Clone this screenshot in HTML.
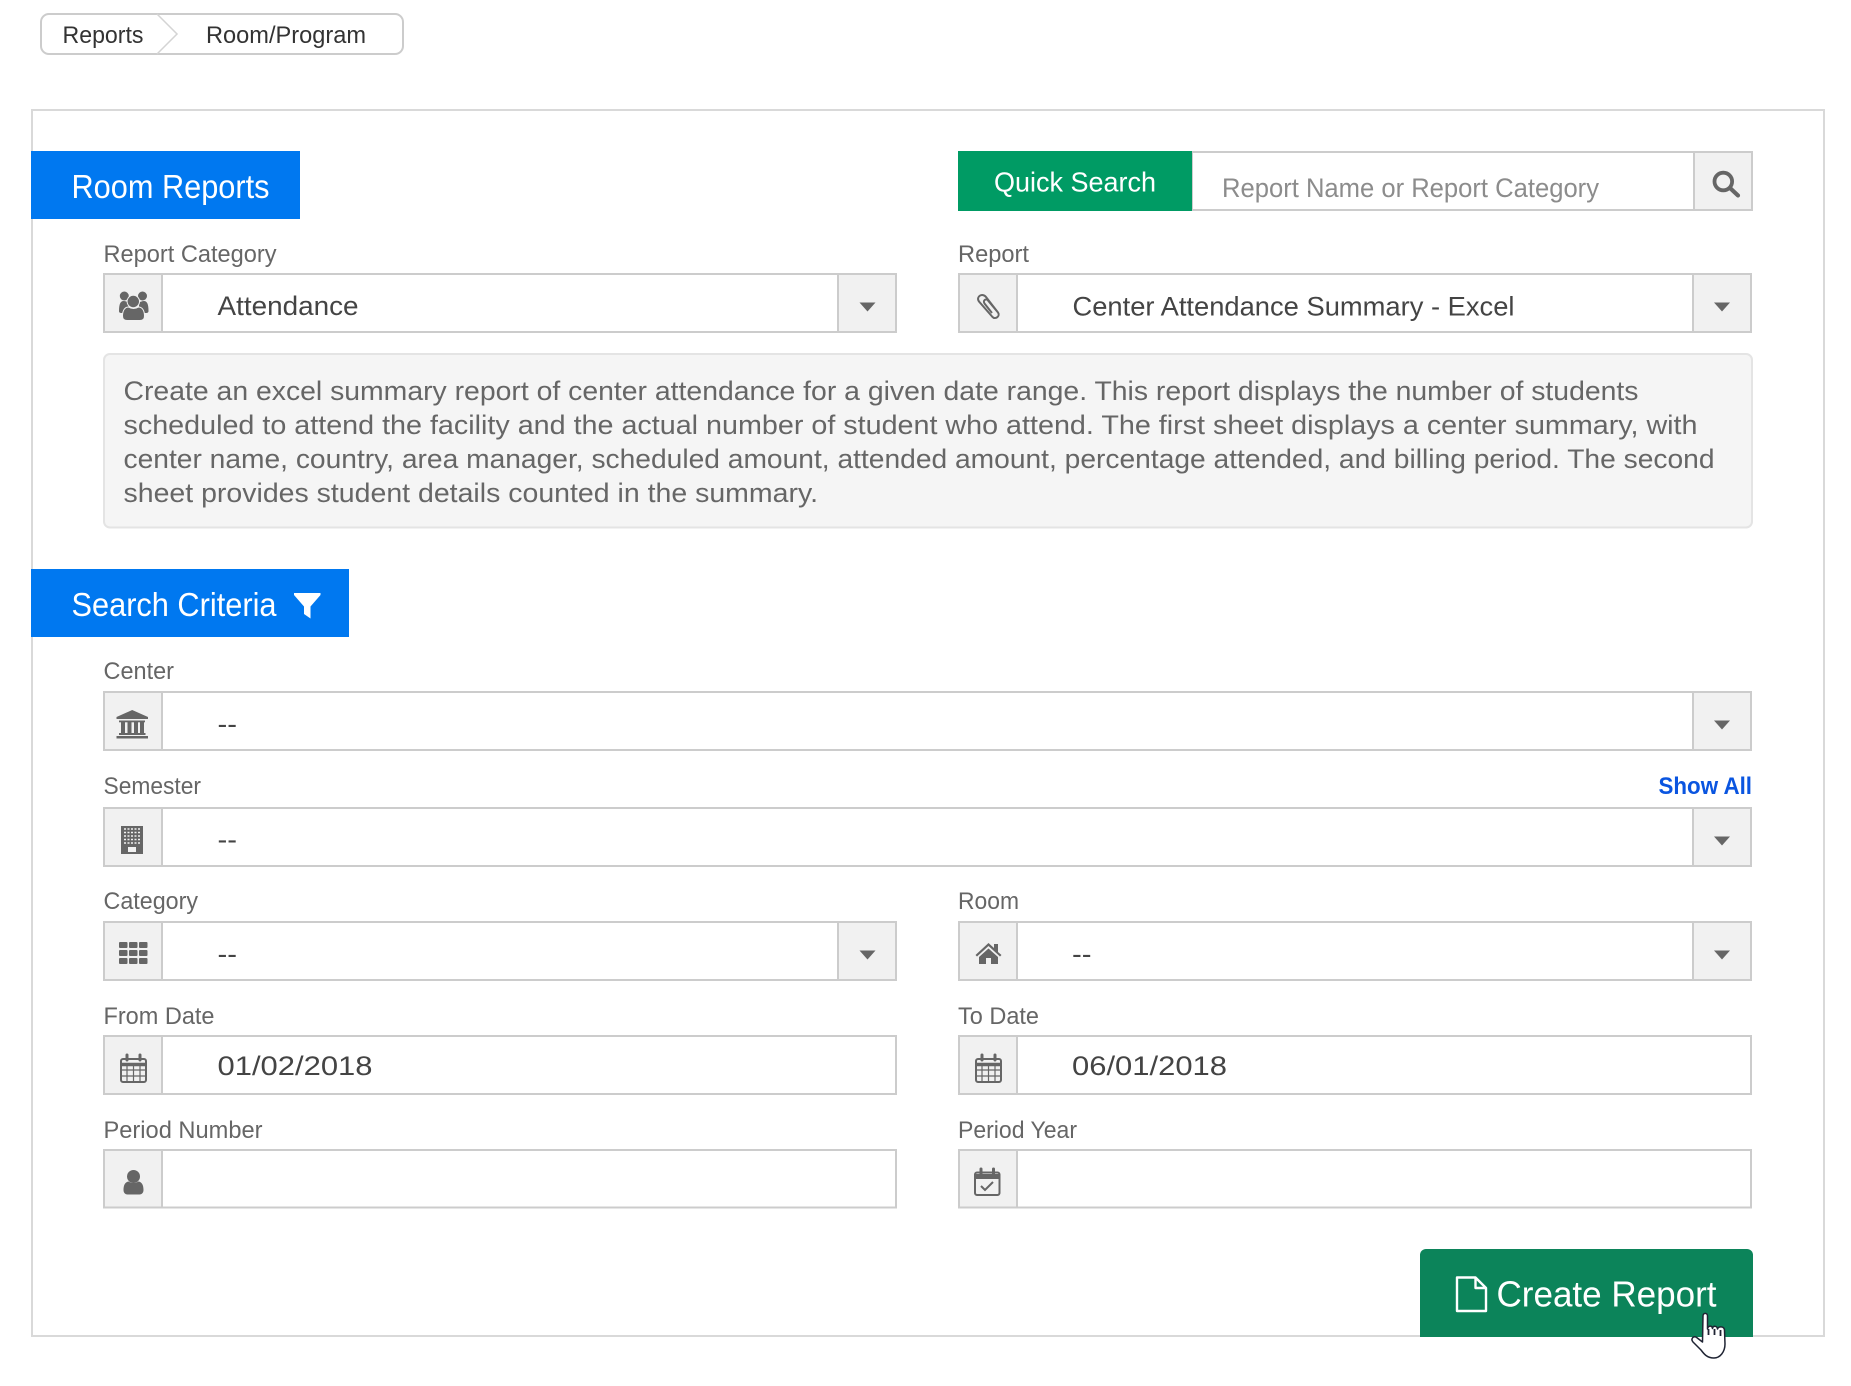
<!DOCTYPE html>
<html lang="en">
<head>
<meta charset="utf-8">
<title>Room Reports</title>
<style>
html,body{margin:0;padding:0;background:#fff;width:1851px;height:1386px;overflow:hidden}
svg{display:block}
text{font-family:"Liberation Sans",sans-serif;white-space:pre}
.bx{fill:#fff;stroke:#ccc;stroke-width:2}
.ad{fill:#f1f1f1;stroke:#ccc;stroke-width:2}
.lb{font-size:24px;fill:#666}
.v{font-size:27px;fill:#444}
.d{font-size:27px;fill:#666}
.h{font-size:33px;fill:#fff}
.i{fill:#666}
.tr{fill:#666}
</style>
</head>
<body>
<svg width="1851" height="1386" viewBox="0 0 1851 1386" xmlns="http://www.w3.org/2000/svg">
<!-- breadcrumb -->
<rect x="41" y="14" width="362" height="40" rx="8" fill="#fff" stroke="#ccc" stroke-width="2"/>
<path d="M157 14 L177 34 L157 54" fill="none" stroke="#d4d4d4" stroke-width="1.5"/>
<text x="62.500" y="43" font-size="24" fill="#333" textLength="81" lengthAdjust="spacingAndGlyphs">Reports</text>
<text x="206" y="43" font-size="24" fill="#333" textLength="160" lengthAdjust="spacingAndGlyphs">Room/Program</text>
<!-- panel -->
<rect x="32" y="110" width="1792" height="1226" fill="#fff" stroke="#d9d9d9" stroke-width="2"/>
<!-- room reports header -->
<rect x="31" y="151" width="269" height="68" fill="#0078f0"/>
<text class="h" x="71.500" y="198" textLength="198" lengthAdjust="spacingAndGlyphs">Room Reports</text>
<!-- quick search -->
<rect class="bx" x="1192" y="152" width="560" height="58"/>
<rect class="ad" x="1694" y="152" width="58" height="58"/>
<rect x="958" y="151" width="234" height="60" fill="#009b64"/>
<text x="994" y="191.500" font-size="28" fill="#fff" textLength="162" lengthAdjust="spacingAndGlyphs">Quick Search</text>
<text x="1222" y="197" font-size="27" fill="#8c8c8c" textLength="377" lengthAdjust="spacingAndGlyphs">Report Name or Report Category</text>
<circle cx="1723.300" cy="181.500" r="8.800" fill="none" stroke="#666" stroke-width="3.800"/>
<path d="M1730 188 L1738 195.500" stroke="#666" stroke-width="4.200" stroke-linecap="round"/>
<!-- report category -->
<text class="lb" x="103.500" y="262" textLength="173" lengthAdjust="spacingAndGlyphs">Report Category</text>
<rect class="bx" x="104" y="274" width="792" height="58"/>
<rect class="ad" x="104" y="274" width="58" height="58"/>
<rect class="ad" x="838" y="274" width="58" height="58"/>
<path class="tr" d="M859.500 302.500h16l-8 9z"/>
<text class="v" x="217.500" y="315" textLength="141" lengthAdjust="spacingAndGlyphs">Attendance</text>
<g class="i">
<circle cx="124.300" cy="296" r="4.500"/><circle cx="142.500" cy="296" r="4.500"/>
<path d="M119 311c0-7 1.500-10 4.500-10 2 0 3 1 5 1v11h-7c-1.500 0-2.500-.500-2.500-2zM148.500 311c0-7-1.500-10-4.500-10-2 0-3 1-5 1v11h7c1.500 0 2.500-.500 2.500-2z"/>
<circle cx="133.300" cy="301.500" r="6.200" stroke="#f1f1f1" stroke-width="1"/>
<path d="M122.500 316c0-6.500 3-9 6-9 1.500 1 3 1.500 5 1.500s3.500-.500 5-1.500c3 0 6 2.500 6 9 0 3-2 4.500-4.500 4.500h-13c-2.500 0-4.500-1.500-4.500-4.500z" stroke="#f1f1f1" stroke-width="1"/>
</g>
<!-- report -->
<text class="lb" x="958" y="262" textLength="71" lengthAdjust="spacingAndGlyphs">Report</text>
<rect class="bx" x="959" y="274" width="792" height="58"/>
<rect class="ad" x="959" y="274" width="58" height="58"/>
<rect class="ad" x="1693" y="274" width="58" height="58"/>
<path class="tr" d="M1714 302.500h16l-8 9z"/>
<text class="v" x="1072.500" y="315.500" textLength="442" lengthAdjust="spacingAndGlyphs">Center Attendance Summary - Excel</text>
<path d="M998 312.500 L986 297 C982.500 292.500 975.500 296.500 979 301.500 L992.500 317 C995.500 320 1000.500 316 998 312.500 L988 300.500 C986 298 982.500 300.500 984.500 303.500 L992 313" fill="none" stroke="#666" stroke-width="2"/>
<!-- description -->
<rect x="104" y="354" width="1648" height="173.500" rx="6" fill="#f5f5f5" stroke="#e4e4e4" stroke-width="2"/>
<text class="d" x="123.500" y="400" textLength="1515" lengthAdjust="spacingAndGlyphs">Create an excel summary report of center attendance for a given date range. This report displays the number of students</text>
<text class="d" x="123.500" y="434" textLength="1574" lengthAdjust="spacingAndGlyphs">scheduled to attend the facility and the actual number of student who attend. The first sheet displays a center summary, with</text>
<text class="d" x="123.500" y="468" textLength="1591" lengthAdjust="spacingAndGlyphs">center name, country, area manager, scheduled amount, attended amount, percentage attended, and billing period. The second</text>
<text class="d" x="123.500" y="502" textLength="694.500" lengthAdjust="spacingAndGlyphs">sheet provides student details counted in the summary.</text>
<!-- search criteria -->
<rect x="31" y="569" width="318" height="68" fill="#0078f0"/>
<text class="h" x="71.500" y="616" textLength="205" lengthAdjust="spacingAndGlyphs">Search Criteria</text>
<path d="M294 593h26.500v2l-10 11.500v12l-6.500-4.500v-7.500l-10-11.500z" fill="#fff"/>
<!-- center -->
<text class="lb" x="103.500" y="679" textLength="70.500" lengthAdjust="spacingAndGlyphs">Center</text>
<rect class="bx" x="104" y="692" width="1647" height="58"/>
<rect class="ad" x="104" y="692" width="58" height="58"/>
<rect class="ad" x="1693" y="692" width="58" height="58"/>
<path class="tr" d="M1714 720.500h16l-8 9z"/>
<text class="v" x="217.500" y="733" textLength="19.500" lengthAdjust="spacingAndGlyphs">--</text>
<g class="i">
<path d="M132.200 710 L148 717v2H116.500v-2z"/>
<rect x="119" y="720.500" width="26" height="1.800"/>
<rect x="121" y="722" width="4" height="11"/><rect x="127.500" y="722" width="4" height="11"/><rect x="134" y="722" width="4" height="11"/><rect x="140" y="722" width="4" height="11"/>
<rect x="119" y="733" width="26.500" height="2"/>
<rect x="116.500" y="736" width="31.500" height="2.500"/>
</g>
<!-- semester -->
<text class="lb" x="103.500" y="794" textLength="97.500" lengthAdjust="spacingAndGlyphs">Semester</text>
<text x="1658.500" y="794" font-size="24" font-weight="bold" fill="#0a55e0" textLength="93.500" lengthAdjust="spacingAndGlyphs">Show All</text>
<rect class="bx" x="104" y="808" width="1647" height="58"/>
<rect class="ad" x="104" y="808" width="58" height="58"/>
<rect class="ad" x="1693" y="808" width="58" height="58"/>
<path class="tr" d="M1714 836.500h16l-8 9z"/>
<text class="v" x="217.500" y="848.500" textLength="19.500" lengthAdjust="spacingAndGlyphs">--</text>
<rect class="i" x="121" y="826" width="22" height="28"/>
<path d="M124 829h16M124 832.500h16M124 836h16M124 839.500h16M124 843h16" stroke="#f1f1f1" stroke-width="1.500" stroke-dasharray="2 1.500"/>
<rect x="128" y="847" width="8" height="5" fill="#f1f1f1"/>
<!-- category -->
<text class="lb" x="103.500" y="909" textLength="94.500" lengthAdjust="spacingAndGlyphs">Category</text>
<rect class="bx" x="104" y="922" width="792" height="58"/>
<rect class="ad" x="104" y="922" width="58" height="58"/>
<rect class="ad" x="838" y="922" width="58" height="58"/>
<path class="tr" d="M859.500 950.500h16l-8 9z"/>
<text class="v" x="217.500" y="963" textLength="19.500" lengthAdjust="spacingAndGlyphs">--</text>
<g class="i">
<rect x="119" y="942" width="8.500" height="6" rx="1"/><rect x="129" y="942" width="8.500" height="6" rx="1"/><rect x="139" y="942" width="8.500" height="6" rx="1"/>
<rect x="119" y="950" width="8.500" height="6" rx="1"/><rect x="129" y="950" width="8.500" height="6" rx="1"/><rect x="139" y="950" width="8.500" height="6" rx="1"/>
<rect x="119" y="958" width="8.500" height="6" rx="1"/><rect x="129" y="958" width="8.500" height="6" rx="1"/><rect x="139" y="958" width="8.500" height="6" rx="1"/>
</g>
<!-- room -->
<text class="lb" x="958" y="909" textLength="61" lengthAdjust="spacingAndGlyphs">Room</text>
<rect class="bx" x="959" y="922" width="792" height="58"/>
<rect class="ad" x="959" y="922" width="58" height="58"/>
<rect class="ad" x="1693" y="922" width="58" height="58"/>
<path class="tr" d="M1714 950.500h16l-8 9z"/>
<text class="v" x="1072" y="963" textLength="19.500" lengthAdjust="spacingAndGlyphs">--</text>
<path class="i" d="M988.500 943 L994 948v-4h4v8l3.500 3-1.500 1.500-11.500-10.500-11.500 10.500-1.500-1.500zM988.500 948.500l9.500 8.500v7h-7v-6h-5v6h-7v-7z"/>
<!-- from date -->
<text class="lb" x="103.500" y="1024" textLength="111" lengthAdjust="spacingAndGlyphs">From Date</text>
<rect class="bx" x="104" y="1036" width="792" height="58"/>
<rect class="ad" x="104" y="1036" width="58" height="58"/>
<text class="v" x="217.500" y="1075" textLength="155" lengthAdjust="spacingAndGlyphs">01/02/2018</text>
<g fill="none" stroke="#666">
<rect x="121" y="1059" width="25" height="23" rx="2" stroke-width="2"/>
<path d="M121 1064.500h25" stroke-width="3.500"/>
<path d="M127 1064v18M133.500 1064v18M140 1064v18M121 1070h25M121 1076h25" stroke-width="1.200"/>
<path d="M127 1055v5M140 1055v5" stroke-width="3" stroke-linecap="round"/>
</g>
<!-- to date -->
<text class="lb" x="958" y="1024" textLength="81" lengthAdjust="spacingAndGlyphs">To Date</text>
<rect class="bx" x="959" y="1036" width="792" height="58"/>
<rect class="ad" x="959" y="1036" width="58" height="58"/>
<text class="v" x="1072" y="1075" textLength="155" lengthAdjust="spacingAndGlyphs">06/01/2018</text>
<g fill="none" stroke="#666">
<rect x="976" y="1059" width="25" height="23" rx="2" stroke-width="2"/>
<path d="M976 1064.500h25" stroke-width="3.500"/>
<path d="M982 1064v18M988.500 1064v18M995 1064v18M976 1070h25M976 1076h25" stroke-width="1.200"/>
<path d="M982 1055v5M995 1055v5" stroke-width="3" stroke-linecap="round"/>
</g>
<!-- period number -->
<text class="lb" x="103.500" y="1138" textLength="159" lengthAdjust="spacingAndGlyphs">Period Number</text>
<rect class="bx" x="104" y="1150" width="792" height="57.500"/>
<rect class="ad" x="104" y="1150" width="58" height="57.500"/>
<circle class="i" cx="133.500" cy="1176.500" r="6.500"/>
<path class="i" d="M123.500 1190c0-5.500 2-8 5-8.500 1.500 1 3 1.500 5 1.500s3.500-.500 5-1.500c3 .500 5 3 5 8.500 0 3-2 4.500-4 4.500h-12c-2 0-4-1.500-4-4.500z"/>
<!-- period year -->
<text class="lb" x="958" y="1138" textLength="119" lengthAdjust="spacingAndGlyphs">Period Year</text>
<rect class="bx" x="959" y="1150" width="792" height="57.500"/>
<rect class="ad" x="959" y="1150" width="58" height="57.500"/>
<g fill="none" stroke="#666">
<rect x="975" y="1172.500" width="24.500" height="22.500" rx="2" stroke-width="2"/>
<path d="M975 1176.500h24.500" stroke-width="5"/>
<path d="M981 1169v5M993.500 1169v5" stroke-width="3" stroke-linecap="round"/>
<path d="M981 1186l4 4 8-8" stroke-width="2"/>
</g>
<!-- create report -->
<path d="M1420 1337v-82a6 6 0 0 1 6-6h321a6 6 0 0 1 6 6v82z" fill="#0c845a"/>
<path d="M1457 1277.500h18.500l10.500 10.500v23h-29z M1475.500 1277.500v10.500h10.500" fill="none" stroke="#fff" stroke-width="2.400" stroke-linejoin="round"/>
<text x="1496.500" y="1306.500" font-size="36" fill="#fff" textLength="220" lengthAdjust="spacingAndGlyphs">Create Report</text>
<!-- cursor -->
<path d="M1703 1316C1703 1312.500 1707.500 1312.500 1707.500 1316L1707.500 1329C1708 1325.500 1712 1325 1712.500 1328.500C1713 1325.500 1717 1325.500 1717.500 1329C1718.500 1326 1724.500 1326 1724.500 1330.500L1725 1344C1725 1352 1720 1358 1714 1358C1707 1358 1704 1354 1701 1350L1693 1342C1690.500 1339 1693 1336 1696 1337L1702.500 1342Z" fill="#fff" stroke="#1f2433" stroke-width="1.500" stroke-linejoin="round"/>
<path d="M1708.500 1329v6M1714.500 1329v6M1720.500 1330v6" stroke="#1f2433" stroke-width="1.800"/>
</svg>
</body>
</html>
